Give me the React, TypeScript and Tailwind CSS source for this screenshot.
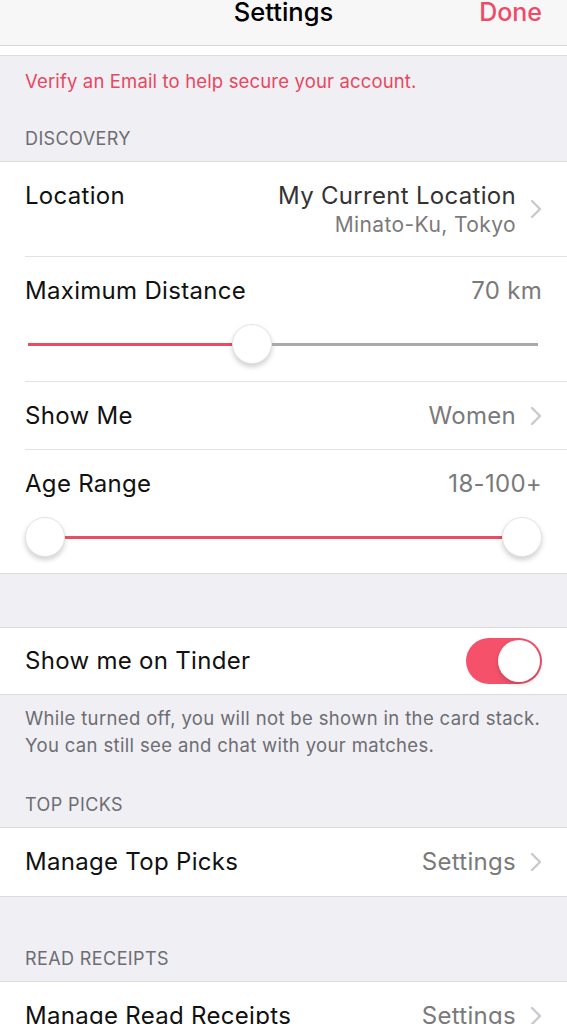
import React from "react"

const font = { fontFamily: 'Inter, "Noto Sans", sans-serif' }

function Chevron() {
  return (
    <svg width="12" height="20" viewBox="0 0 12 20" className="ml-[14px] shrink-0">
      <path d="M2 2 L10 10 L2 18" fill="none" stroke="#c7c7cc" strokeWidth="2.2" strokeLinecap="round" strokeLinejoin="round" />
    </svg>
  )
}

function Thumb() {
  return (
    <div className="w-[40px] h-[40px] shrink-0 rounded-full bg-white border border-[#e3e3e3] shadow-[0_3px_5px_rgba(0,0,0,0.18)]" />
  )
}

function LinkRow({ label, value }: { label: string; value: string }) {
  return (
    <div className="h-[68px] flex items-center px-[25px] text-[24px] tracking-[0.3px]">
      <span className="flex-1 text-[#111]">{label}</span>
      <span className="text-[#7a7a7a]">{value}</span>
      <Chevron />
    </div>
  )
}

function SectionHeader({ children, top }: { children: React.ReactNode; top: string }) {
  return (
    <div className={`px-[25px] pb-[11px] ${top} text-[18px] leading-[22px] text-[#6d6d72] tracking-[0.4px]`}>
      {children}
    </div>
  )
}

export default function App() {
  return (
    <div className="w-[567px] h-[1024px] overflow-hidden bg-[#efeff4] antialiased" style={font}>
      {/* nav bar */}
      <div className="h-[46px] bg-[#f7f7f7] border-b border-[#d8d8d8] relative flex justify-center">
        <span className="text-[25.5px] leading-[28px] -mt-[2px] font-medium text-black">Settings</span>
        <span className="absolute right-[25px] top-[-2px] text-[25px] leading-[28px] font-medium text-[#ef4a67]">Done</span>
      </div>
      <div className="h-[10px] bg-white border-b border-[#dcdcdc]" />

      <div className="px-[25px] pt-[13px] text-[18.5px] leading-[24px] tracking-[0.15px] text-[#e8475f]">
        Verify an Email to help secure your account.
      </div>
      <SectionHeader top="pt-[35px]">DISCOVERY</SectionHeader>

      <div className="bg-white border-y border-[#dcdcdc] text-[24px] tracking-[0.3px]">
        {/* location */}
        <div className="h-[94px] flex px-[25px]">
          <span className="flex-1 pt-[19px] leading-[30px] text-[#111]">Location</span>
          <div className="flex items-center">
            <div className="flex flex-col items-end pt-[1px]">
              <span className="leading-[30px] text-[#333]">My Current Location</span>
              <span className="text-[21px] leading-[28px] tracking-[0.4px] text-[#7a7a7a]">Minato-Ku, Tokyo</span>
            </div>
            <Chevron />
          </div>
        </div>
        <div className="ml-[25px] h-px bg-[#e2e2e2]" />

        {/* max distance */}
        <div className="px-[25px] pt-[19px] pb-[17px]">
          <div className="flex leading-[30px]">
            <span className="flex-1 text-[#111]">Maximum Distance</span>
            <span className="text-[#7a7a7a]">70 km</span>
          </div>
          <div className="mt-[18px] h-[40px] flex items-center pl-[3px] pr-[4px]">
            <div className="w-[204px] h-[3px] bg-[#e94c63]" />
            <Thumb />
            <div className="flex-1 h-[3px] bg-[#a9a9a9]" />
          </div>
        </div>
        <div className="ml-[25px] h-px bg-[#e2e2e2]" />

        {/* show me */}
        <div className="h-[67px] flex items-center px-[25px]">
          <span className="flex-1 text-[#111]">Show Me</span>
          <span className="text-[#7a7a7a]">Women</span>
          <Chevron />
        </div>
        <div className="ml-[25px] h-px bg-[#e2e2e2]" />

        {/* age range */}
        <div className="px-[25px] pt-[19px] pb-[16px]">
          <div className="flex leading-[30px]">
            <span className="flex-1 text-[#111]">Age Range</span>
            <span className="text-[#7a7a7a]">18-100+</span>
          </div>
          <div className="mt-[18px] h-[40px] flex items-center">
            <Thumb />
            <div className="flex-1 h-[3px] bg-[#e94c63]" />
            <Thumb />
          </div>
        </div>
      </div>

      <div className="h-[53px]" />

      <div className="bg-white border-y border-[#dcdcdc] h-[68px] flex items-center px-[25px] text-[24px] tracking-[0.3px]">
        <span className="flex-1 text-[#111]">Show me on Tinder</span>
        <div className="w-[76px] h-[46px] rounded-full bg-[#f5516b] flex items-center justify-end pr-[2px]">
          <div className="w-[42px] h-[42px] rounded-full bg-white shadow-[0_2px_4px_rgba(0,0,0,0.2)]" />
        </div>
      </div>

      <div className="px-[25px] pt-[10px] text-[18.5px] leading-[27px] tracking-[0.35px] text-[#6d6d72]">
        <p>While turned off, you will not be shown in the card stack.</p>
        <p>You can still see and chat with your matches.</p>
      </div>
      <SectionHeader top="pt-[35px]">TOP PICKS</SectionHeader>

      <div className="bg-white border-y border-[#dcdcdc]">
        <LinkRow label="Manage Top Picks" value="Settings" />
      </div>

      <div className="h-[51px]" />
      <SectionHeader top="pt-0">READ RECEIPTS</SectionHeader>

      <div className="bg-white border-y border-[#dcdcdc]">
        <LinkRow label="Manage Read Receipts" value="Settings" />
      </div>
    </div>
  )
}
